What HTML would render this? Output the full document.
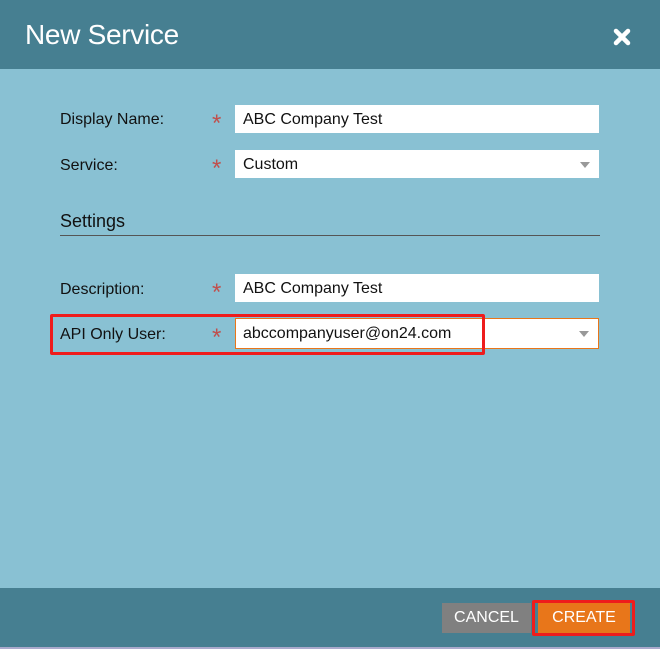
<!DOCTYPE html>
<html><head><style>
*{margin:0;padding:0;box-sizing:border-box}
body{width:660px;height:649px;background:#89c1d3;font-family:"Liberation Sans",sans-serif;position:relative;overflow:hidden}
.hdr{position:absolute;left:0;top:0;width:660px;height:69px;background:#467f91}
.title{position:absolute;left:25px;top:19px;color:#fff;font-size:28px;letter-spacing:-0.3px}
.lbl{position:absolute;left:60px;font-size:16px;color:#111}
.star{position:absolute;left:212px;font-size:24px;color:#c0504d;line-height:1}
.inp{position:absolute;left:235px;width:364px;height:28px;background:#fff;font-size:16px;color:#111;padding:6px 0 0 8px}
.arr{position:absolute;right:9px;top:12px;width:0;height:0;border-left:5px solid transparent;border-right:5px solid transparent;border-top:6px solid #999}
.ftr{position:absolute;left:0;top:588px;width:660px;height:61px;background:#467f91;border-bottom:2px solid #aac}
.btn{position:absolute;top:603px;height:30px;color:#fff;font-size:16px;text-align:center;line-height:30px}
</style></head><body>
<div class="hdr"><div class="title">New Service</div>
<svg style="position:absolute;left:613px;top:28px" width="18" height="18" viewBox="0 0 18 18"><path d="M3 3L15 15M15 3L3 15" stroke="#fff" stroke-width="4.5" stroke-linecap="round"/></svg></div>
<div class="lbl" style="top:111px">Display Name:</div><div class="star" style="top:112px">*</div>
<div class="inp" style="top:105px">ABC Company Test</div>
<div class="lbl" style="top:157px">Service:</div><div class="star" style="top:157px">*</div>
<div class="inp" style="top:150px">Custom<div class="arr"></div></div>
<div class="lbl" style="top:211px;font-size:18px">Settings</div>
<div style="position:absolute;left:60px;top:235px;width:540px;height:1px;background:#555"></div>
<div class="lbl" style="top:281px">Description:</div><div class="star" style="top:281px">*</div>
<div class="inp" style="top:274px">ABC Company Test</div>
<div class="lbl" style="top:326px">API Only User:</div><div class="star" style="top:326px">*</div>
<div class="inp" style="top:318px;height:31px;border:1px solid #e8761a;padding-top:6px;padding-left:7px">abccompanyuser@on24.com<div class="arr"></div></div>
<div style="position:absolute;left:50px;top:314px;width:435px;height:41px;border:3px solid #ee1c1c;border-radius:2px"></div>
<div class="ftr"></div>
<div class="btn" style="left:442px;width:89px;background:#808080">CANCEL</div>
<div style="position:absolute;left:532px;top:600px;width:103px;height:36px;border:3px solid #ee1c1c;border-radius:2px"></div>
<div class="btn" style="left:538px;width:92px;background:#e8761a">CREATE</div>
</body></html>
